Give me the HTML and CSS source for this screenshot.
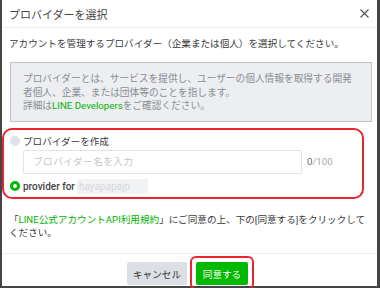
FILE: index.html
```html
<!DOCTYPE html>
<html lang="ja">
<head>
  <meta charset="UTF-8">
  <title>プロバイダーを選択</title>
  <link rel="stylesheet" href="styles.css">
</head>
<body>
  <div class="modal">
    <div class="modal-header">
      <h2>プロバイダーを選択</h2>
      <svg class="close" width="9" height="9" viewBox="0 0 9 9">
        <path d="M0.5 0.5 L8.5 8.5 M8.5 0.5 L0.5 8.5" stroke="#555" stroke-width="1.1" fill="none"/>
      </svg>
    </div>

    <div class="modal-body">
      <p class="lead">アカウントを管理するプロバイダー（企業または個人）を選択してください。</p>

      <div class="info">
        プロバイダーとは、サービスを提供し、ユーザーの個人情報を取得する開発者個人、企業、または団体等のことを指します。<br>
        詳細は<a href="#">LINE Developers</a>をご確認ください。
      </div>

      <div class="choices">
        <label class="radio-row">
          <span class="radio"></span>
          <span class="radio-label">プロバイダーを作成</span>
        </label>
        <div class="name-row">
          <input type="text" class="name-input" placeholder="プロバイダー名を入力">
          <span class="counter"><b>0</b>/100</span>
        </div>
        <label class="radio-row provider-row">
          <span class="radio checked"></span>
          <span class="provider-label">provider for</span>
          <span class="provider-name">hayapapajp</span>
        </label>
      </div>

      <p class="agree">「<a href="#">LINE公式アカウントAPI利用規約</a>」にご同意の上、下の[同意する]をクリックしてください。</p>
    </div>

    <div class="modal-footer">
      <button class="btn cancel">キャンセル</button>
      <span class="mark">
        <button class="btn ok">同意する</button>
      </span>
    </div>
  </div>
</body>
</html>
```

FILE: styles.css
```css
body {
  margin: 0;
  width: 380px;
  height: 288px;
  background: #ffffff;
  font-family: Roboto, "Noto Sans CJK JP", sans-serif;
  color: #3a3a3a;
  overflow: hidden;
}

.modal {
  box-sizing: border-box;
  width: 380px;
  height: 288px;
  border-left: 2px solid #454545;
  border-right: 3px solid #454545;
  border-bottom: 2px solid #454545;
  display: flex;
  flex-direction: column;
}

.modal-header {
  height: 27px;
  border-bottom: 1px solid #eeeeee;
  display: flex;
  align-items: center;
  justify-content: space-between;
  padding: 0 8px 0 7px;
}

.modal-header h2 {
  margin: 0;
  font-size: 11px;
  font-weight: normal;
  color: #444;
}

.close {
  display: block;
}

.modal-body {
  flex: 1;
  padding: 0 5px 0 7px;
}

.lead {
  margin: 9px 0 0;
  font-size: 9.6px;
  line-height: 14px;
}

.info {
  margin: 11px 0 0 1px;
  padding: 9px 18px 8px 12px;
  background: #eceef1;
  border: 1px solid #bfc3c8;
  color: #8a8d91;
  font-size: 9.7px;
  line-height: 13.5px;
}

a {
  color: #00b300;
  text-decoration: none;
}

.choices {
  margin: 6px 8px 0 -7px;
  padding: 4px 6px 3px;
  border: 2px solid #e8262d;
  border-radius: 10px;
}

.radio-row {
  display: flex;
  align-items: center;
  height: 14px;
}

.radio {
  box-sizing: border-box;
  width: 10px;
  height: 10px;
  border-radius: 50%;
  background: #dfe2e6;
  margin-right: 3px;
}

.radio.checked {
  background: #ffffff;
  border: 3px solid #00b900;
}

.radio-label {
  font-size: 9.6px;
  color: #3a3a3a;
}

.name-row {
  display: flex;
  align-items: center;
  margin: 2px 0 0 13px;
}

.name-input {
  box-sizing: border-box;
  width: 279px;
  height: 24px;
  border: 1px solid #e0e3e6;
  border-radius: 2px;
  padding: 0 9px;
  font-family: inherit;
  font-size: 9.6px;
  letter-spacing: 0.5px;
}

.name-input::placeholder {
  color: #c3c6ca;
}

.counter {
  margin-left: 5px;
  font-size: 9.6px;
  color: #a5a9ad;
}

.counter b {
  font-weight: normal;
  color: #666;
}

.provider-row {
  height: 15px;
  margin-top: 5px;
}

.provider-label {
  font-size: 10px;
  font-weight: 500;
  color: #444;
}

.provider-name {
  margin-left: 2px;
  height: 15px;
  line-height: 15px;
  padding: 0 18px 0 2px;
  background: #f1f2f4;
  border-radius: 2px;
  font-size: 10px;
  color: #d6d8db;
}

.agree {
  margin: 14px 4px 0 0;
  font-size: 9.6px;
  line-height: 13.5px;
}

.modal-footer {
  height: 24px;
  border-top: 1px solid #eeeeee;
  padding: 8px 0 0;
  display: flex;
  justify-content: center;
  align-items: flex-start;
  gap: 9px;
}

.btn {
  height: 23px;
  border: none;
  border-radius: 2px;
  font-family: inherit;
  font-size: 9.6px;
  padding: 0;
  white-space: nowrap;
}

.cancel {
  width: 60px;
  background: #dcdfe3;
  color: #333;
}

.ok {
  width: 52px;
  background: #00b900;
  color: #ffffff;
}

.mark {
  position: relative;
  display: block;
  margin-right: 4px;
}

.mark .btn {
  display: block;
}

.mark::after {
  content: "";
  position: absolute;
  left: -6px;
  right: -6px;
  top: -6px;
  bottom: -5px;
  border: 2px solid #e8262d;
  border-radius: 6px;
}
```
